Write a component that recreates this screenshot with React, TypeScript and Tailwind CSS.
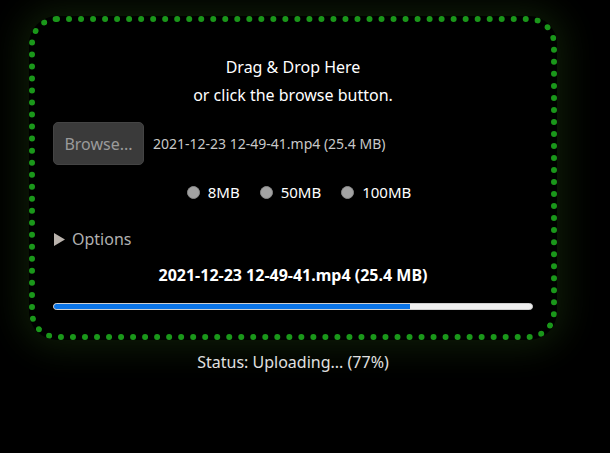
import React from "react";

function Radio({ label }: { label: string }) {
  return (
    <div className="flex items-center gap-[8px]">
      <span className="block w-[13px] h-[13px] rounded-full bg-[#a3a3a3] border border-[#8a8a8a]" />
      <span className="text-white text-[15px]">{label}</span>
    </div>
  );
}

export default function App() {
  return (
    <div
      className="min-h-[453px] bg-black pt-[16px] pl-[29px]"
      style={{ fontFamily: '"Noto Sans", "Open Sans", sans-serif' }}
    >
      <div className="w-[528px]">
        <div className="rounded-[28px] border-[6px] border-dotted border-[#1a971a] bg-black shadow-[0_0_35px_8px_rgba(40,80,20,0.35)] px-[18px] pt-[31px] pb-[24px] flex flex-col">
          <div className="text-center text-white text-[16px] leading-[28px]">
            <div>Drag &amp; Drop Here</div>
            <div>or click the browse button.</div>
          </div>
          <div className="mt-[13px] flex items-center gap-[9px]">
            <button className="w-[91px] h-[43px] rounded-[5px] bg-[#3a3a3a] border border-[#444] text-[#9a9a9a] text-[16px]">
              Browse...
            </button>
            <span className="text-[#c8c8c8] text-[14px]">2021-12-23 12-49-41.mp4 (25.4 MB)</span>
          </div>
          <div className="mt-[15px] h-[24px] flex items-center justify-center gap-[20px] pl-[12px]">
            <Radio label="8MB" />
            <Radio label="50MB" />
            <Radio label="100MB" />
          </div>
          <div className="mt-[23px] h-[24px] flex items-center gap-[6px] text-[#b0b0b0] text-[16px]">
            <svg width="12" height="13" viewBox="0 0 12 13" className="ml-[1px]">
              <polygon points="0,0 11,6.5 0,13" fill="#bab3ad" />
            </svg>
            <span>Options</span>
          </div>
          <div className="mt-[14px] text-center text-white font-bold text-[16px] leading-[20px]">
            2021-12-23 12-49-41.mp4 (25.4 MB)
          </div>
          <div className="mt-[18px] h-[7px] rounded-full bg-[#efefef] overflow-hidden border border-[#d0d0d0]">
            <div className="h-full bg-[#0b74e6]" style={{ width: "74.5%" }} />
          </div>
        </div>
        <div className="mt-[10px] text-center text-[#e0e0e0] text-[16px] leading-[24px]">
          Status: Uploading... (77%)
        </div>
      </div>
    </div>
  );
}
